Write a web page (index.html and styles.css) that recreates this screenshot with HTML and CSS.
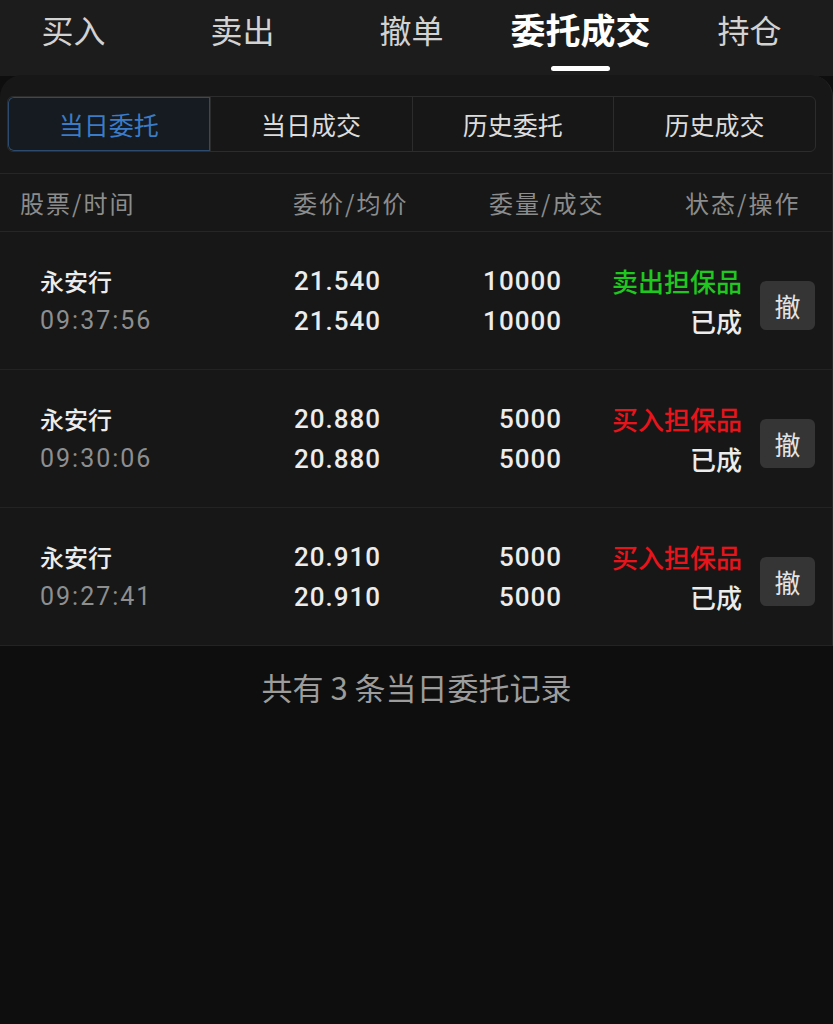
FILE: index.html
```html
<!DOCTYPE html>
<html lang="zh-CN">
<head>
    <meta charset="UTF-8">
    <meta name="viewport" content="width=device-width, initial-scale=1.0">
    <title>委托成交</title>
    <link rel="stylesheet" href="styles.css">
</head>
<body>
    <div class="tabs">
        <div class="tab">买入</div>
        <div class="tab">卖出</div>
        <div class="tab">撤单</div>
        <div class="tab active">委托成交</div>
        <div class="tab">持仓</div>
    </div>

    <div class="panel">
        <div class="seg-wrap">
            <div class="segments">
                <div class="seg active">当日委托</div>
                <div class="seg">当日成交</div>
                <div class="seg">历史委托</div>
                <div class="seg">历史成交</div>
            </div>
        </div>

        <div class="head">
            <div class="c-name">股票/时间</div>
            <div class="c-price">委价/均价</div>
            <div class="c-vol">委量/成交</div>
            <div class="c-state">状态/操作</div>
        </div>

        <div class="row">
            <div class="c-name">
                <div class="stock">永安行</div>
                <div class="time">09:37:56</div>
            </div>
            <div class="c-price num">
                <div>21.540</div>
                <div>21.540</div>
            </div>
            <div class="c-vol num">
                <div>10000</div>
                <div>10000</div>
            </div>
            <div class="c-state">
                <div class="side sell">卖出担保品</div>
                <div class="done">已成</div>
            </div>
            <button class="cancel">撤</button>
        </div>

        <div class="row">
            <div class="c-name">
                <div class="stock">永安行</div>
                <div class="time">09:30:06</div>
            </div>
            <div class="c-price num">
                <div>20.880</div>
                <div>20.880</div>
            </div>
            <div class="c-vol num">
                <div>5000</div>
                <div>5000</div>
            </div>
            <div class="c-state">
                <div class="side buy">买入担保品</div>
                <div class="done">已成</div>
            </div>
            <button class="cancel">撤</button>
        </div>

        <div class="row">
            <div class="c-name">
                <div class="stock">永安行</div>
                <div class="time">09:27:41</div>
            </div>
            <div class="c-price num">
                <div>20.910</div>
                <div>20.910</div>
            </div>
            <div class="c-vol num">
                <div>5000</div>
                <div>5000</div>
            </div>
            <div class="c-state">
                <div class="side buy">买入担保品</div>
                <div class="done">已成</div>
            </div>
            <button class="cancel">撤</button>
        </div>
    </div>

    <div class="footer">共有 3 条当日委托记录</div>
</body>
</html>
```

FILE: styles.css
```css
body {
    margin: 0;
    background-color: #0e0e0e;
    color: #e8e8e8;
    font-family: "Noto Sans CJK SC", "Liberation Sans", sans-serif;
    overflow: hidden;
}
.tabs {
    display: flex;
    margin-left: -11px;
    height: 76px;
    background-color: #1c1c1c;
}
.tab {
    flex: none;
    width: 169px;
    height: 76px;
    line-height: 58px;
    text-align: center;
    font-size: 32px;
    color: #d2d2d2;
    position: relative;
}
.tab.active {
    font-size: 35px;
    font-weight: bold;
    color: #ffffff;
}
.tab.active::after {
    content: "";
    position: absolute;
    left: 55px;
    bottom: 5px;
    width: 59px;
    height: 5px;
    border-radius: 3px;
    background-color: #ffffff;
}
.panel {
    margin-top: -1px;
    background-color: #171717;
    border-radius: 22px 22px 0 0;
    border-right: 1px solid #262626;
}
.seg-wrap {
    padding: 21px 16px 21px 7px;
    border-bottom: 1px solid #262626;
}
.segments {
    display: grid;
    grid-template-columns: repeat(4, 1fr);
    height: 54px;
    border: 1px solid #2c2c2c;
    border-radius: 6px;
    overflow: hidden;
}
.seg {
    display: flex;
    align-items: center;
    justify-content: center;
    font-size: 25px;
    color: #dcdcdc;
    border-left: 1px solid #2c2c2c;
}
.seg:first-child {
    border-left: none;
}
.seg.active {
    color: #3a7cc8;
    background-color: #151b21;
    box-shadow: inset 0 0 0 1px #2c4b6e;
    border-radius: 6px 0 0 6px;
}
.head {
    display: flex;
    align-items: center;
    height: 57px;
    padding-left: 20px;
    font-size: 24px;
    letter-spacing: 2px;
    color: #8c8c8c;
    border-bottom: 1px solid #262626;
}
.head .c-name {
    width: 273px;
}
.head .c-price {
    width: 117px;
}
.head .c-vol {
    width: 117px;
    margin-left: 79px;
}
.head .c-state {
    width: 117px;
    margin-left: 79px;
}
.row {
    display: flex;
    align-items: center;
    height: 137px;
    padding-left: 40px;
    border-bottom: 1px solid #232323;
}
.row .c-name {
    width: 216px;
}
.row .c-price {
    width: 125px;
    text-align: right;
}
.row .c-vol {
    width: 181px;
    text-align: right;
}
.row .c-state {
    width: 180px;
    text-align: right;
}
.row > div > div {
    height: 40px;
    line-height: 40px;
}
.stock {
    font-size: 24px;
    font-weight: 500;
    color: #ececec;
}
.time {
    font-family: "Roboto", "Liberation Sans", sans-serif;
    font-size: 25px;
    letter-spacing: 2px;
    color: #8e8e8e;
}
.num {
    font-family: "Roboto", "Liberation Sans", sans-serif;
    font-size: 26px;
    font-weight: 500;
    letter-spacing: 1px;
    color: #ececec;
}
.side {
    font-size: 26px;
    font-weight: 500;
}
.side.sell {
    color: #1fc81f;
}
.side.buy {
    color: #e8141c;
}
.done {
    font-size: 26px;
    font-weight: 500;
    color: #ececec;
}
.cancel {
    width: 55px;
    height: 49px;
    margin-left: 18px;
    margin-top: 9px;
    padding: 0;
    border: none;
    border-radius: 6px;
    background-color: #353535;
    color: #e4e4e4;
    font-family: "Noto Sans CJK SC", sans-serif;
    font-size: 26px;
}
.footer {
    padding-top: 18px;
    text-align: center;
    font-size: 31px;
    color: #9c9c9c;
}
```
